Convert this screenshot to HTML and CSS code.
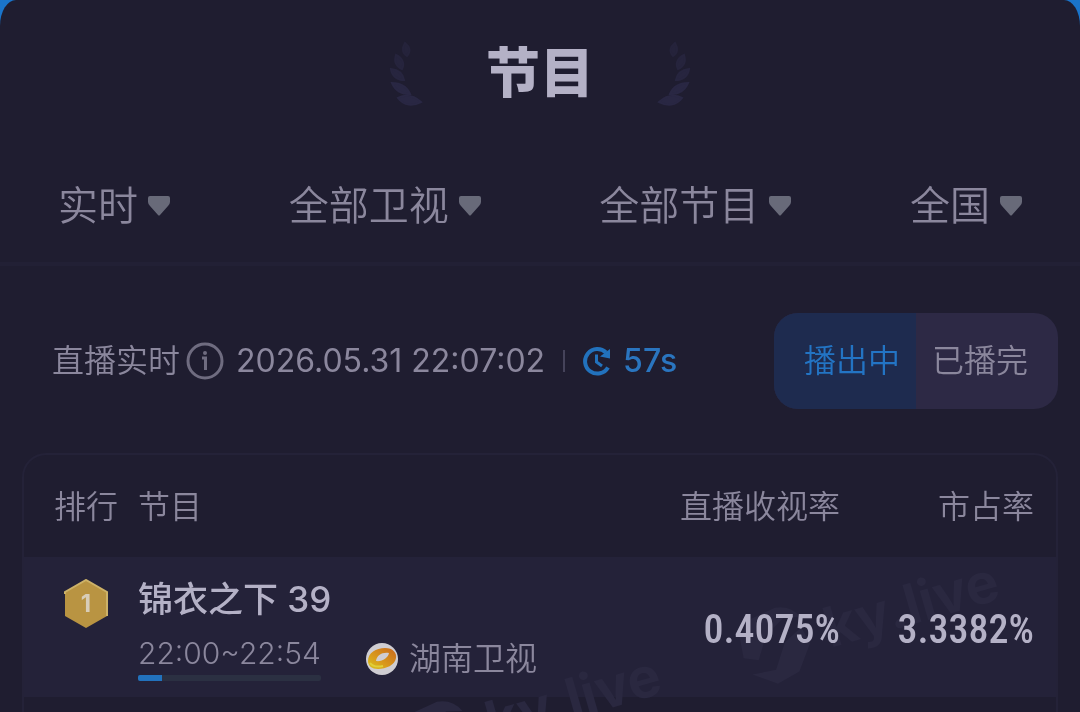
FILE: index.html
```html
<!DOCTYPE html>
<html lang="zh-CN">

<head>
    <meta charset="UTF-8">
    <meta name="viewport" content="width=device-width, initial-scale=1.0">
    <title>节目</title>
    <link rel="stylesheet" href="styles.css">
</head>

<body>
    <main class="sheet">
        <header class="title-bar">
            <svg class="laurel" width="36" height="66" viewBox="0 0 36 66" aria-hidden="true">
                <path d="M17 2 C22 6 23 10 19 15 C14 12 14 7 17 2Z" opacity=".6" />
                <path d="M8 14 C14 17 17 22 14 28 C8 25 6 20 8 14Z" opacity=".7" />
                <path d="M3 28 C11 29 15 33 16 39 C9 39 4 35 3 28Z" opacity=".8" />
                <path d="M4 42 C13 42 19 46 22 53 C13 53 7 49 4 42Z" />
                <path d="M10 57 C18 53 26 55 33 61 C25 65 16 65 10 57Z" />
            </svg>
            <h1>节目</h1>
            <svg class="laurel laurel-right" width="36" height="66" viewBox="0 0 36 66" aria-hidden="true">
                <path d="M17 2 C22 6 23 10 19 15 C14 12 14 7 17 2Z" opacity=".6" />
                <path d="M8 14 C14 17 17 22 14 28 C8 25 6 20 8 14Z" opacity=".7" />
                <path d="M3 28 C11 29 15 33 16 39 C9 39 4 35 3 28Z" opacity=".8" />
                <path d="M4 42 C13 42 19 46 22 53 C13 53 7 49 4 42Z" />
                <path d="M10 57 C18 53 26 55 33 61 C25 65 16 65 10 57Z" />
            </svg>
        </header>

        <form class="filters">
            <div class="filter">
                <select aria-label="时间">
                    <option>实时</option>
                </select>
                <svg class="arrow" width="22" height="20" viewBox="0 0 22 20" aria-hidden="true">
                    <path d="M2 0H20Q22 0 22 2V6Q22 8 20 10L12 19Q11 20 10 19L2 10Q0 8 0 6V2Q0 0 2 0Z" />
                </svg>
            </div>
            <div class="filter">
                <select aria-label="频道">
                    <option>全部卫视</option>
                </select>
                <svg class="arrow" width="22" height="20" viewBox="0 0 22 20" aria-hidden="true">
                    <path d="M2 0H20Q22 0 22 2V6Q22 8 20 10L12 19Q11 20 10 19L2 10Q0 8 0 6V2Q0 0 2 0Z" />
                </svg>
            </div>
            <div class="filter">
                <select aria-label="节目类型">
                    <option>全部节目</option>
                </select>
                <svg class="arrow" width="22" height="20" viewBox="0 0 22 20" aria-hidden="true">
                    <path d="M2 0H20Q22 0 22 2V6Q22 8 20 10L12 19Q11 20 10 19L2 10Q0 8 0 6V2Q0 0 2 0Z" />
                </svg>
            </div>
            <div class="filter">
                <select aria-label="地区">
                    <option>全国</option>
                </select>
                <svg class="arrow" width="22" height="20" viewBox="0 0 22 20" aria-hidden="true">
                    <path d="M2 0H20Q22 0 22 2V6Q22 8 20 10L12 19Q11 20 10 19L2 10Q0 8 0 6V2Q0 0 2 0Z" />
                </svg>
            </div>
        </form>

        <section class="status">
            <div class="live">
                <span class="live-label">直播实时</span>
                <button type="button" class="info" aria-label="说明">
                    <svg width="38" height="38" viewBox="0 0 38 38">
                        <circle cx="19" cy="19" r="17" />
                        <path d="M16 16H19.500V28" />
                        <circle class="dot" cx="19" cy="11" r="2" />
                    </svg>
                </button>
                <time>2026.05.31 22:07:02</time>
                <span class="separator"></span>
                <svg class="clock" width="28" height="30" viewBox="0 0 28 30" aria-hidden="true">
                    <path d="M23 6.500A12.300 12.300 0 1 0 25 21.500" />
                    <path class="hands" d="M13.500 8.500V16L19 20" />
                    <path class="tip" d="M27 3L27 12.500L17 10.500Z" />
                </svg>
                <span class="countdown">57s</span>
            </div>
            <div class="tabs">
                <button type="button" class="tab active">播出中</button>
                <button type="button" class="tab">已播完</button>
            </div>
        </section>

        <section class="card">
            <table>
                <thead>
                    <tr>
                        <th class="rank">排行</th>
                        <th>节目</th>
                        <th class="rating">直播收视率</th>
                        <th class="share">市占率</th>
                    </tr>
                </thead>
                <tbody>
                    <tr>
                        <td class="rank">
                            <div class="medal">
                                <svg width="44" height="50" viewBox="0 0 44 50" aria-hidden="true">
                                    <path d="M22 1L43 13V37L22 49L1 37V13Z" fill="#b99442" />
                                    <path d="M1 15V13L22 1L43 13V37" fill="none" stroke="#cdb268" stroke-width="2" />
                                </svg>
                                <span>1</span>
                            </div>
                        </td>
                        <td class="program">
                            <div class="name">锦衣之下 39</div>
                            <div class="meta">
                                <div class="slot">
                                    <div class="slot-time">22:00~22:54</div>
                                    <div class="progress">
                                        <div class="progress-value" style="width: 13%"></div>
                                    </div>
                                </div>
                                <div class="channel">
                                    <svg width="34" height="34" viewBox="0 0 34 34" aria-hidden="true">
                                        <defs>
                                            <linearGradient id="mango" x1="0" y1="1" x2="1" y2="0">
                                                <stop offset="0" stop-color="#d9c51c" />
                                                <stop offset=".4" stop-color="#d99a1c" />
                                                <stop offset="1" stop-color="#c9681c" />
                                            </linearGradient>
                                        </defs>
                                        <circle cx="17" cy="17" r="16" fill="#cfcdd2" />
                                        <path fill="url(#mango)" fill-rule="evenodd"
                                            d="M3 19C3 11 11 6 20 6C28 6 32 11 31 16C30 23 21 27 13 27C7 27 3 24 3 19ZM11 19C17 20 23 16 24 11C17 10 12 13 11 19Z" />
                                        <path d="M5 21C8 25 13 25 18 24" fill="none" stroke="#e0cf3a" stroke-width="2" />
                                    </svg>
                                    <span>湖南卫视</span>
                                </div>
                            </div>
                        </td>
                        <td class="rating">0.4075%</td>
                        <td class="share">3.3382%</td>
                    </tr>
                </tbody>
            </table>
            <div class="watermark watermark-1" aria-hidden="true">
                <svg width="80" height="84" viewBox="0 0 80 84">
                    <path d="M26 12L52 8Q68 10 74 24L58 20L36 32L22 54L8 48L10 26Z" />
                    <path d="M72 34L76 52L58 76L34 82L12 66L36 68L52 44Z" />
                </svg>
                <span>ky.live</span>
            </div>
            <div class="watermark watermark-2" aria-hidden="true">
                <svg width="80" height="84" viewBox="0 0 80 84">
                    <path d="M26 12L52 8Q68 10 74 24L58 20L36 32L22 54L8 48L10 26Z" />
                    <path d="M72 34L76 52L58 76L34 82L12 66L36 68L52 44Z" />
                </svg>
                <span>ky.live</span>
            </div>
        </section>
    </main>
</body>

</html>
```
FILE: styles.css
```css
* {
    box-sizing: border-box;
}

body {
    margin: 0;
    background-color: #1a74ca;
    color: #8b879d;
    font-family: Inter, "Noto Sans CJK SC", sans-serif;
    font-size: 32px;
    line-height: 40px;
    font-weight: 350;
}

svg {
    display: block;
    flex: none;
}

button,
select {
    margin: 0;
    padding: 0;
    border: none;
    background: none;
    color: inherit;
    font: inherit;
    cursor: pointer;
}

.sheet {
    display: flex;
    flex-direction: column;
    height: 100vh;
    min-height: 640px;
    overflow: hidden;
    background-color: #1f1d30;
    border-radius: 16px 16px 0 0 / 26px 26px 0 0;
}

/* title */
.title-bar {
    display: flex;
    justify-content: center;
    align-items: center;
    gap: 62px;
    height: 146px;
    padding-top: 2px;
}

.title-bar h1 {
    margin: 0;
    color: #b4b1c6;
    font-size: 54px;
    line-height: 60px;
    font-weight: 900;
}

.laurel {
    fill: #292743;
    stroke: #292743;
    stroke-width: 2;
}

.laurel-right {
    transform: scaleX(-1);
}

/* filters */
.filters {
    display: flex;
    justify-content: space-between;
    align-items: center;
    height: 120px;
    padding: 4px 58px 0;
    border-bottom: 4px solid #222035;
}

.filter {
    display: flex;
    align-items: center;
    gap: 10px;
}

.filter select {
    appearance: none;
    font-size: 40px;
    line-height: 56px;
}

.arrow {
    fill: #686a79;
}

/* live status */
.status {
    display: flex;
    justify-content: space-between;
    align-items: center;
    padding: 47px 22px 44px 52px;
}

.live {
    display: flex;
    align-items: center;
    white-space: nowrap;
}

.info {
    margin: 0 12px 0 6px;
}

.info svg {
    fill: none;
    stroke: #6f6c80;
    stroke-width: 3;
}

.info .dot {
    fill: #6f6c80;
    stroke: none;
}

.live time {
    font-weight: 400;
}

.separator {
    width: 2px;
    height: 22px;
    margin: 0 18px;
    background-color: #45435a;
}

.clock {
    margin-right: 12px;
    fill: none;
    stroke: #2272bd;
    stroke-width: 4;
}

.clock .hands {
    stroke-width: 3;
}

.clock .tip {
    fill: #2272bd;
    stroke: none;
}

.countdown {
    color: #2a75bf;
    font-weight: 450;
}

.tabs {
    display: flex;
    overflow: hidden;
    border-radius: 24px;
    background-color: #2d2945;
}

.tab {
    height: 96px;
    padding: 0 30px 0 16px;
}

.tab.active {
    padding: 0 16px 0 30px;
    background-color: #1e2b4f;
    color: #2374c4;
}

/* ranking */
.card {
    position: relative;
    flex: 1;
    margin: 0 22px;
    overflow: hidden;
    border: 2px solid #242238;
    border-bottom: none;
    border-radius: 24px 24px 0 0;
}

table {
    width: 100%;
    border-collapse: collapse;
}

th,
td {
    padding: 0;
    text-align: left;
}

th {
    height: 102px;
    padding-top: 2px;
    font-weight: 350;
}

td {
    height: 140px;
}

tbody tr {
    background-color: #242239;
}

.rank {
    width: 114px;
    padding-left: 30px;
}

th.rating,
th.share {
    text-align: right;
}

.rating {
    width: 200px;
}

.share {
    width: 216px;
    padding-right: 22px;
}

td.rating,
td.share {
    padding-top: 6px;
    color: #b4b1c6;
    font-family: "Roboto Condensed", Roboto, sans-serif;
    font-size: 40px;
    font-weight: 500;
    text-align: right;
}

td.rank,
td.program {
    vertical-align: top;
}

td.program {
    padding-top: 22px;
}

.medal {
    display: grid;
    place-items: center;
    width: 44px;
    height: 50px;
    margin: 22px 0 0 10px;
}

.medal svg,
.medal span {
    grid-area: 1 / 1;
}

.medal span {
    color: #d8cdb8;
    font-size: 24px;
    line-height: 24px;
    font-weight: 700;
}

.name {
    color: #b4b1c6;
    font-size: 35px;
    font-weight: 450;
}

.meta {
    display: flex;
    align-items: flex-end;
    gap: 44px;
    margin-top: 16px;
    white-space: nowrap;
}

.slot-time {
    font-size: 30px;
    line-height: 36px;
    font-weight: 300;
}

.progress {
    height: 6px;
    margin-top: 4px;
    border-radius: 2px;
    overflow: hidden;
    background-color: #2b3042;
}

.progress-value {
    height: 6px;
    background-color: #2272bd;
}

.channel {
    display: flex;
    align-items: center;
    gap: 10px;
    padding-bottom: 2px;
}

/* watermark, only lightens the row and never covers its text */
.watermark {
    position: absolute;
    display: flex;
    align-items: center;
    gap: 14px;
    color: #2a2840;
    font-size: 56px;
    line-height: 84px;
    font-weight: 700;
    transform: rotate(-16deg);
    pointer-events: none;
    mix-blend-mode: lighten;
}

.watermark svg {
    fill: #2a2840;
}

.watermark-1 {
    right: 54px;
    top: 120px;
}

.watermark-2 {
    right: 392px;
    top: 214px;
}
```
